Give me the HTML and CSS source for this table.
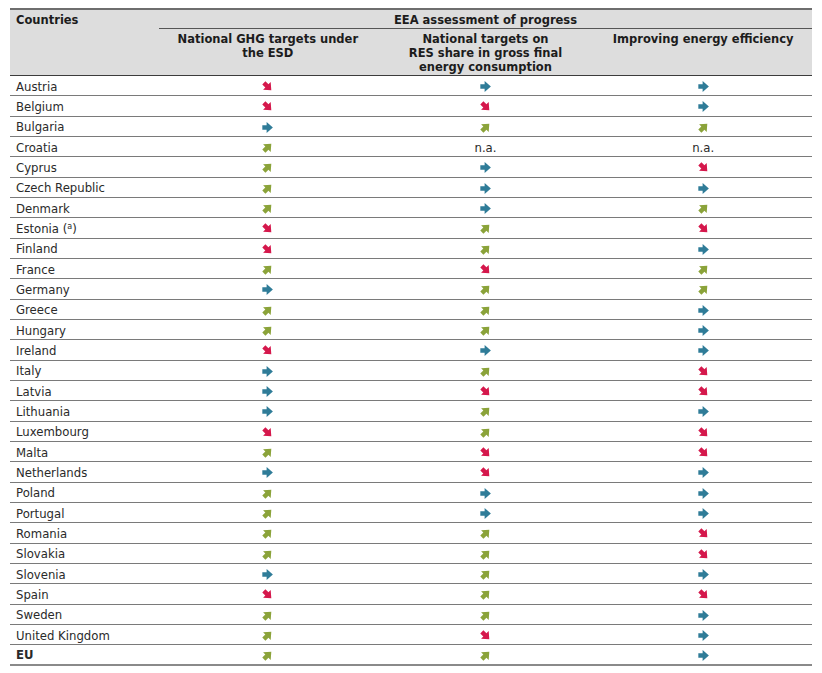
FILE: index.html
```html
<!DOCTYPE html>
<html>
<head>
<meta charset="utf-8">
<link rel="stylesheet" href="styles.css">
</head>
<body>
<svg width="0" height="0" class="defs">
  <defs>
    <path id="arr" d="M0.3 3.0 H4.2 V0.1 L9.9 5 L4.2 9.9 V7.0 H0.3 Z"/>
  </defs>
</svg>
<div class="tbl">
  <div class="head">
    <div class="h-country">Countries</div>
    <div class="h-group">
      <div class="h-title">EEA assessment of progress</div>
      <div class="h-cols">
        <div class="h-col">National GHG targets under the ESD</div>
        <div class="h-col">National targets on<br>RES share in gross final energy consumption</div>
        <div class="h-col">Improving energy efficiency</div>
      </div>
    </div>
  </div>
  <div id="body"></div>
</div>
<script>
const data = [
["Austria","d","r","r"],["Belgium","d","d","r"],["Bulgaria","r","u","u"],["Croatia","u","n","n"],
["Cyprus","u","r","d"],["Czech Republic","u","r","r"],["Denmark","u","r","u"],["Estonia (<sup>a</sup>)","d","u","d"],
["Finland","d","u","r"],["France","u","d","u"],["Germany","r","u","u"],["Greece","u","u","r"],
["Hungary","u","u","r"],["Ireland","d","r","r"],["Italy","r","u","d"],["Latvia","r","d","d"],
["Lithuania","r","u","r"],["Luxembourg","d","u","d"],["Malta","u","d","d"],["Netherlands","r","d","r"],
["Poland","u","r","r"],["Portugal","u","r","r"],["Romania","u","u","d"],["Slovakia","u","u","d"],
["Slovenia","r","u","r"],["Spain","d","u","d"],["Sweden","u","u","r"],["United Kingdom","u","d","r"],
["EU","u","u","r"]];
const rot = {r:0,d:45,u:-45};
const cls = {r:"teal",d:"red",u:"green"};
function cell(v){
  if(v==="n") return '<div class="c mid na">n.a.</div>';
  return '<div class="c mid"><svg class="ar '+cls[v]+'" width="11" height="11" viewBox="0 0 10 10"><use href="#arr" transform="rotate('+rot[v]+' 5 5)"/></svg></div>';
}
document.getElementById("body").innerHTML = data.map((r,i)=>
  '<div class="row'+(r[0]==="EU"?" eu":"")+'"><div class="c name">'+r[0]+'</div>'+cell(r[1])+cell(r[2])+cell(r[3])+'</div>').join("");
</script>
</body>
</html>
```
FILE: styles.css
```css
html, body { margin: 0; padding: 0; background: #fff; }
body { font-family: "DejaVu Sans", Verdana, sans-serif; color: #2a2a2a; }
.defs { position: absolute; }
.tbl { margin: 8px 0 0 10px; width: 802px; }
.head {
  display: grid; grid-template-columns: 149px 1fr;
  background: #dddddd; border-top: 2px solid #6e6e6e; border-bottom: 1px solid #3c3c3c;
  height: 68px; box-sizing: border-box;
  font-weight: bold; font-size: 11.5px; color: #1c1c1c;
}
.h-country { padding: 3px 0 0 6px; line-height: 14px; }
.h-group { display: flex; flex-direction: column; }
.h-title { height: 19px; box-sizing: border-box; border-bottom: 1px solid #555; text-align: center; line-height: 14px; padding-top: 3px; }
.h-cols { display: grid; grid-template-columns: 1fr 1fr 1fr; }
.h-col { text-align: center; line-height: 14px; padding: 3px 12px 0; }
.row {
  display: grid; grid-template-columns: 149px 1fr 1fr 1fr;
  height: 20.34px; box-sizing: border-box; border-bottom: 1px solid #7a7a7a;
  font-size: 11.7px; align-items: center; padding-top: 2px;
}
.row:last-child { border-bottom: 2px solid #8a8a8a; }
.eu .name { font-weight: bold; }
.c.name { padding-left: 6px; }
.c.mid { display: flex; justify-content: center; align-items: center; }
.na { font-size: 11.7px; }
sup { font-size: 8px; vertical-align: 4px; }
.ar { display: block; }
.red { fill: #d5184c; }
.teal { fill: #2f7c98; }
.green { fill: #8ba33a; }
```
